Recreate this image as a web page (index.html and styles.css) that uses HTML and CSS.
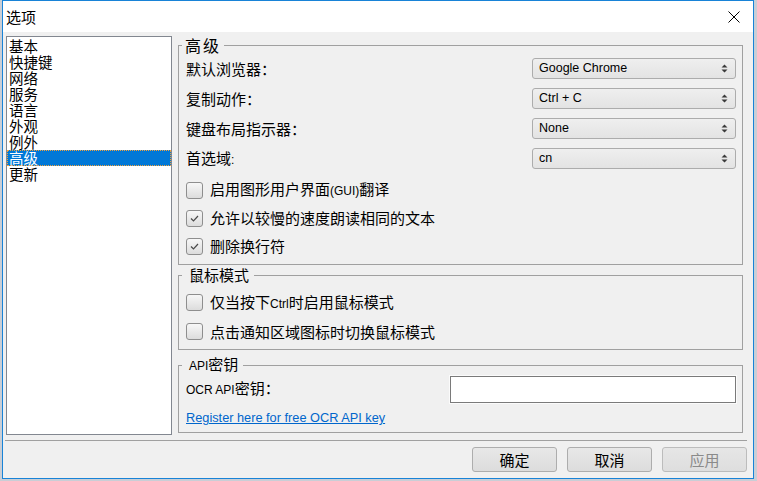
FILE: index.html
```html
<!DOCTYPE html>
<html lang="zh-CN">
<head>
<meta charset="utf-8">
<title>选项</title>
<link rel="stylesheet" href="styles.css">
</head>
<body>
<div class="window">
  <div class="titlebar">
    <span class="title">选项</span>
    <svg class="close" width="12" height="12" viewBox="0 0 12 12"><path d="M0.5 0.5 L11.5 11.5 M11.5 0.5 L0.5 11.5" stroke="#000" stroke-width="1" fill="none"/></svg>
  </div>
  <div class="content">
    <div class="main">
      <ul class="navlist">
        <li>基本</li>
        <li>快捷键</li>
        <li>网络</li>
        <li>服务</li>
        <li>语言</li>
        <li>外观</li>
        <li>例外</li>
        <li class="selected">高级</li>
        <li>更新</li>
      </ul>
      <div class="panel">
        <fieldset class="group g1">
          <legend>高级</legend>
          <div class="group-body">
            <div class="form-row">
              <span class="label">默认浏览器：</span>
              <div class="select"><span class="select-text">Google Chrome</span><svg class="arrows" width="7" height="9" viewBox="0 0 7 9"><path d="M3.5 0.5 L6.5 3.5 L0.5 3.5 Z M0.5 5.5 L6.5 5.5 L3.5 8.5 Z" fill="#3a3a3a"/></svg></div>
            </div>
            <div class="form-row">
              <span class="label">复制动作：</span>
              <div class="select"><span class="select-text">Ctrl + C</span><svg class="arrows" width="7" height="9" viewBox="0 0 7 9"><path d="M3.5 0.5 L6.5 3.5 L0.5 3.5 Z M0.5 5.5 L6.5 5.5 L3.5 8.5 Z" fill="#3a3a3a"/></svg></div>
            </div>
            <div class="form-row">
              <span class="label">键盘布局指示器：</span>
              <div class="select"><span class="select-text">None</span><svg class="arrows" width="7" height="9" viewBox="0 0 7 9"><path d="M3.5 0.5 L6.5 3.5 L0.5 3.5 Z M0.5 5.5 L6.5 5.5 L3.5 8.5 Z" fill="#3a3a3a"/></svg></div>
            </div>
            <div class="form-row last">
              <span class="label">首选域<span class="lat">:</span></span>
              <div class="select"><span class="select-text">cn</span><svg class="arrows" width="7" height="9" viewBox="0 0 7 9"><path d="M3.5 0.5 L6.5 3.5 L0.5 3.5 Z M0.5 5.5 L6.5 5.5 L3.5 8.5 Z" fill="#3a3a3a"/></svg></div>
            </div>
            <div class="check-row">
              <span class="cb"></span><span>启用图形用户界面<span class="lat">(GUI)</span>翻译</span>
            </div>
            <div class="check-row">
              <span class="cb"><svg width="15" height="15" viewBox="0 0 15 15"><path d="M4 7.5 L6.5 10 L11 5" stroke="#4a4a4a" stroke-width="1.2" fill="none"/></svg></span><span>允许以较慢的速度朗读相同的文本</span>
            </div>
            <div class="check-row">
              <span class="cb"><svg width="15" height="15" viewBox="0 0 15 15"><path d="M4 7.5 L6.5 10 L11 5" stroke="#4a4a4a" stroke-width="1.2" fill="none"/></svg></span><span>删除换行符</span>
            </div>
          </div>
        </fieldset>
        <fieldset class="group g2">
          <legend>鼠标模式</legend>
          <div class="group-body">
            <div class="check-row tall">
              <span class="cb"></span><span>仅当按下<span class="lat">Ctrl</span>时启用鼠标模式</span>
            </div>
            <div class="check-row tall">
              <span class="cb"></span><span>点击通知区域图标时切换鼠标模式</span>
            </div>
          </div>
        </fieldset>
        <fieldset class="group g3">
          <legend><span class="lat">API</span>密钥</legend>
          <div class="group-body">
            <div class="input-row">
              <span class="label"><span class="lat">OCR API</span>密钥：</span>
              <div class="textbox"></div>
            </div>
            <a class="link" href="#">Register here for free OCR API key</a>
          </div>
        </fieldset>
      </div>
    </div>
    <div class="sep"></div>
    <div class="buttons">
      <button class="btn">确定</button>
      <button class="btn">取消</button>
      <button class="btn disabled">应用</button>
    </div>
  </div>
</div>
</body>
</html>
```
FILE: styles.css
```css
* { box-sizing: border-box; }
html, body { margin: 0; padding: 0; }
body {
  background: #c9ced6;
  width: 757px;
  height: 481px;
  overflow: hidden;
  font-family: "Noto Sans CJK SC", sans-serif;
  font-size: 15px;
  color: #000;
}
.window {
  margin-left: 2px;
  width: 752px;
  height: 479px;
  border: 1px solid #1883d7;
  background: #f0f0f0;
  display: flex;
  flex-direction: column;
}
.titlebar {
  height: 31px;
  background: #fff;
  display: flex;
  align-items: center;
  justify-content: space-between;
  padding-left: 3px;
  padding-right: 13px;
}
.title { font-size: 15px; line-height: 18px; }
.close { display: block; }
.content {
  flex: 1;
  display: flex;
  flex-direction: column;
}
.main {
  display: flex;
  gap: 6px;
  padding: 4px 10px 0 3px;
}
.navlist {
  list-style: none;
  margin: 0;
  padding: 1px 0 0 0;
  width: 166px;
  height: 399px;
  border: 1px solid #828790;
  background: #fff;
}
.navlist li {
  height: 16px;
  line-height: 16px;
  font-size: 14.5px;
  padding-left: 2px;
}
.navlist li.selected {
  background: #0078d7;
  color: #fff;
  outline: 1px dotted #f2a23c;
  outline-offset: -1px;
}
.panel {
  flex: 1;
  display: flex;
  flex-direction: column;
}
.group {
  margin: 0;
  padding: 0 6px 0 7px;
  border: 1px solid #a0a0a0;
  min-width: 0;
}
.group legend {
  font-size: 15px;
  line-height: 18px;
  padding: 0 5px 0 7px;
  margin-left: -4px;
}
.g1 legend { padding: 0 3px 0 3px; letter-spacing: 2px; font-size: 16px; }
.g2 { margin-top: 1px; }
.g3 { margin-top: 5px; }
.group-body { display: flex; flex-direction: column; }
.g1 .group-body { padding: 4px 0 4px 0; }
.g2 .group-body { padding: 4px 0 3px 0; }
.g3 .group-body { padding: 0 0 6px 0; }
.form-row {
  display: flex;
  align-items: center;
  justify-content: space-between;
  height: 21px;
  margin-bottom: 9px;
}
.form-row.last { margin-bottom: 7px; }
.label { line-height: 18px; white-space: nowrap; }
.lat {
  font-family: "Liberation Sans", sans-serif;
  font-size: 12px;
}
.select {
  width: 204px;
  height: 21px;
  border: 1px solid #acacac;
  border-radius: 3px;
  background: linear-gradient(#efefef, #e3e3e3);
  display: flex;
  align-items: center;
  justify-content: space-between;
  padding: 0 7px 0 6px;
}
.select-text {
  font-family: "Liberation Sans", sans-serif;
  font-size: 12.5px;
  line-height: 15px;
}
.arrows { display: block; }
.check-row {
  display: flex;
  align-items: center;
  height: 28px;
  line-height: 18px;
  white-space: nowrap;
}
.check-row.tall { height: 29px; }
.cb {
  width: 17px;
  height: 17px;
  flex: none;
  margin-right: 7px;
  border: 1px solid #8e8e8e;
  border-radius: 3px;
  background: linear-gradient(#f7f7f7, #dcdcdc);
  display: flex;
  align-items: center;
  justify-content: center;
}
.cb svg { display: block; }
.input-row {
  display: flex;
  align-items: center;
  justify-content: space-between;
  height: 28px;
}
.textbox {
  width: 286px;
  height: 27px;
  background: #fff;
  border: 1px solid #7a7a7a;
  box-shadow: 0 0 0 1px #fbfbfb;
}
.link {
  margin-top: 7px;
  align-self: flex-start;
  font-family: "Liberation Sans", sans-serif;
  font-size: 12.75px;
  line-height: 16px;
  color: #0066cc;
  text-decoration: underline;
}
.sep {
  margin: 5px 6px 0 2px;
  border-top: 1px solid #a0a0a0;
}
.buttons {
  display: flex;
  justify-content: flex-end;
  gap: 10px;
  padding: 6px 6px 0 0;
}
.btn {
  width: 85px;
  height: 25px;
  border: 1px solid #adadad;
  border-radius: 3px;
  background: linear-gradient(#e8e8e8, #dcdcdc);
  font-family: "Noto Sans CJK SC", sans-serif;
  font-size: 15px;
  line-height: 18px;
  color: #000;
  padding: 0;
}
.btn.disabled { color: #8a8a8a; background: linear-gradient(#e6e6e6, #dedede); border-color: #bcbcbc; }
```
